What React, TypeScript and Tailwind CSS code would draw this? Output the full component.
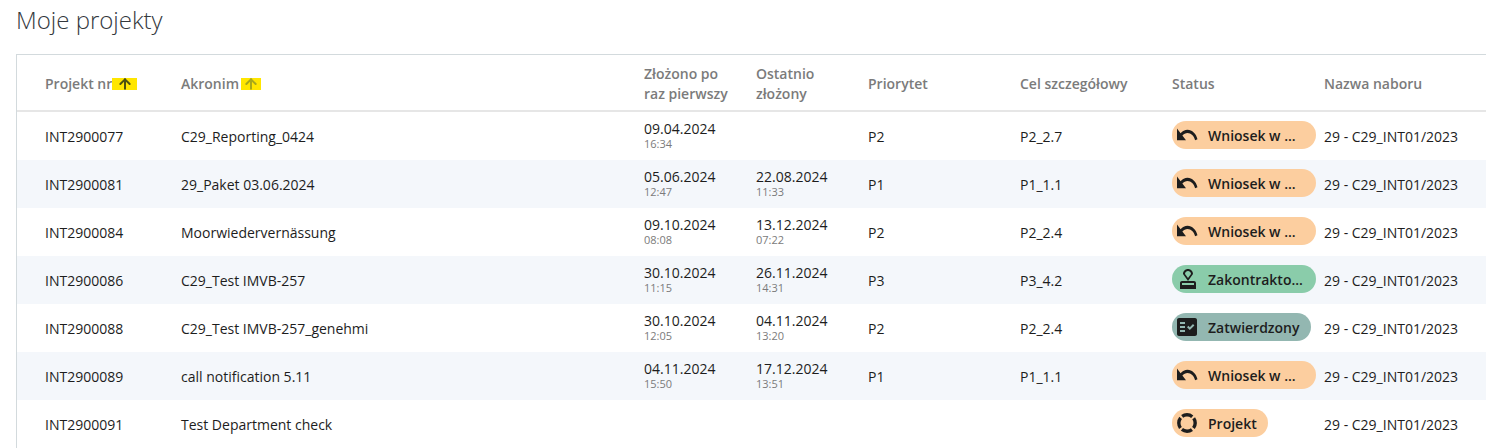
import { MdFactCheck, MdOutlineApproval, MdUndo } from "react-icons/md";
import { ArrowUp } from "lucide-react";
import type { ReactNode } from "react";

type StatusKind = "wniosek" | "kontrakt" | "zatwierdzony" | "projekt";

type Row = {
  nr: string;
  akronim: string;
  first?: [string, string];
  last?: [string, string];
  priorytet?: string;
  cel?: string;
  status: StatusKind;
};

const rows: Row[] = [
  { nr: "INT2900077", akronim: "C29_Reporting_0424", first: ["09.04.2024", "16:34"], priorytet: "P2", cel: "P2_2.7", status: "wniosek" },
  { nr: "INT2900081", akronim: "29_Paket 03.06.2024", first: ["05.06.2024", "12:47"], last: ["22.08.2024", "11:33"], priorytet: "P1", cel: "P1_1.1", status: "wniosek" },
  { nr: "INT2900084", akronim: "Moorwiedervernässung", first: ["09.10.2024", "08:08"], last: ["13.12.2024", "07:22"], priorytet: "P2", cel: "P2_2.4", status: "wniosek" },
  { nr: "INT2900086", akronim: "C29_Test IMVB-257", first: ["30.10.2024", "11:15"], last: ["26.11.2024", "14:31"], priorytet: "P3", cel: "P3_4.2", status: "kontrakt" },
  { nr: "INT2900088", akronim: "C29_Test IMVB-257_genehmi", first: ["30.10.2024", "12:05"], last: ["04.11.2024", "13:20"], priorytet: "P2", cel: "P2_2.4", status: "zatwierdzony" },
  { nr: "INT2900089", akronim: "call notification 5.11", first: ["04.11.2024", "15:50"], last: ["17.12.2024", "13:51"], priorytet: "P1", cel: "P1_1.1", status: "wniosek" },
  { nr: "INT2900091", akronim: "Test Department check", status: "projekt" },
];

const columns = "grid grid-cols-[136px_463px_112px_112px_152px_152px_152px_1fr]";

function ProjektIcon() {
  return (
    <svg width="20" height="20" viewBox="0 0 20 20" fill="none" stroke="currentColor" strokeWidth="3.4">
      <circle cx="10" cy="10" r="8.2" strokeDasharray="10.8 2.08" strokeDashoffset="5.4" />
    </svg>
  );
}

function StatusPill({ kind }: { kind: StatusKind }) {
  const config: Record<StatusKind, { label: string; width: string; bg: string; icon: ReactNode }> = {
    wniosek: { label: "Wniosek w ...", width: "w-[144px]", bg: "bg-[#fcce9f]", icon: <MdUndo size={24} className="scale-y-130" /> },
    kontrakt: { label: "Zakontrakto...", width: "w-[144px]", bg: "bg-[#8accaa]", icon: <MdOutlineApproval size={24} className="translate-x-px" /> },
    zatwierdzony: { label: "Zatwierdzony", width: "w-[139px]", bg: "bg-[#93b7b1]", icon: <MdFactCheck size={24} /> },
    projekt: { label: "Projekt", width: "w-[96px]", bg: "bg-[#fcce9f]", icon: <ProjektIcon /> },
  };
  const c = config[kind];
  return (
    <span className={`${c.width} ${c.bg} mb-[2px] flex h-7 items-center rounded-full pl-[3px] text-[14px] font-semibold whitespace-nowrap text-[#1d1d1d]`}>
      <span className="flex w-[24px] justify-center">{c.icon}</span>
      <span className="ml-[9px]">{c.label}</span>
    </span>
  );
}

function DateCell({ value }: { value?: [string, string] }) {
  if (!value) return <div />;
  return (
    <div className="mb-[1px] flex flex-col justify-center">
      <span className="pb-[1px] text-[14px] leading-[15px] text-[#1d1d1d]">{value[0]}</span>
      <span className="text-[11px] leading-[13px] text-[#7b7b7b]">{value[1]}</span>
    </div>
  );
}

function SortArrow({ width, faded }: { width: string; faded?: boolean }) {
  return (
    <span className={`${width} flex h-[12px] items-center justify-center bg-[#ffe600]`}>
      <ArrowUp size={16} strokeWidth={3} className={faded ? "text-[#a8a81a]" : "text-[#4c5010]"} />
    </span>
  );
}

export default function App() {
  return (
    <div className="h-[448px] w-[1486px] overflow-hidden bg-white pl-4 font-['Open_Sans',sans-serif]">
      <h1 className="pt-[2px] text-[24px] leading-[36px] font-light text-[#33383d]">Moje projekty</h1>
      <div className="mt-[16px] w-[1600px] border-t border-l border-[#d3dadd]">
        <div className={`${columns} h-[57px] items-center border-b-2 border-[#e6e6e6] pt-[2px] pl-7 text-[14px] leading-[20px] font-semibold text-[#7b7b7b]`}>
          <div className="flex items-center">
            Projekt nr
            <SortArrow width="w-[25px]" />
          </div>
          <div className="flex items-center">
            Akronim
            <span className="ml-[2px]">
              <SortArrow width="w-[20px]" faded />
            </span>
          </div>
          <div>
            Złożono po
            <br />
            raz pierwszy
          </div>
          <div>
            Ostatnio
            <br />
            złożony
          </div>
          <div>Priorytet</div>
          <div>Cel szczegółowy</div>
          <div>Status</div>
          <div>Nazwa naboru</div>
        </div>
        {rows.map((row, i) => (
          <div
            key={row.nr}
            className={`${columns} h-12 items-center pl-7 text-[14px] text-[#1d1d1d] ${i % 2 === 1 ? "bg-[#f4f7fb]" : "bg-white"}`}
          >
            <div>{row.nr}</div>
            <div>{row.akronim}</div>
            <DateCell value={row.first} />
            <DateCell value={row.last} />
            <div>{row.priorytet}</div>
            <div>{row.cel}</div>
            <StatusPill kind={row.status} />
            <div>29 - C29_INT01/2023</div>
          </div>
        ))}
      </div>
    </div>
  );
}
